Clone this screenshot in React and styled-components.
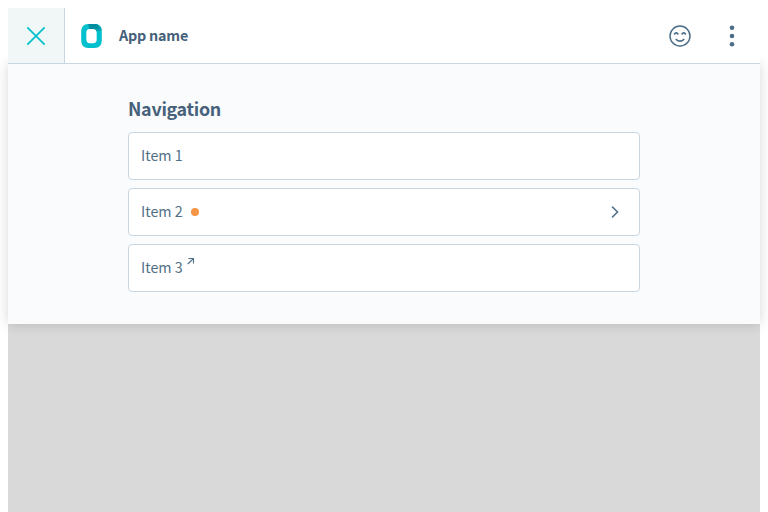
import React from "react";
import styled, { createGlobalStyle } from "styled-components";

const GlobalStyle = createGlobalStyle`
  * { box-sizing: border-box; }
  body {
    margin: 0;
    font-family: "Noto Sans CJK SC", sans-serif;
    color: #4f6f87;
  }
`;

const Page = styled.div`
  display: flex;
  flex-direction: column;
  height: 512px;
  padding: 8px 8px 0;
  background: #fff;
`;

const Header = styled.header`
  display: flex;
  flex: none;
  align-items: stretch;
  height: 56px;
  background: #fff;
  border-bottom: 1px solid #c8d6e2;
  position: relative;
  z-index: 2;
`;

const CloseButton = styled.button`
  display: flex;
  align-items: center;
  justify-content: center;
  width: 57px;
  padding: 0;
  border: 0;
  border-right: 1px solid #c8d6e2;
  background: #f1f7f7;
  color: #00bfca;
`;

const Brand = styled.div`
  display: flex;
  flex: 1;
  align-items: center;
  gap: 16px;
  padding-left: 16px;
`;

const AppName = styled.span`
  margin: -1px 0 1px;
  font-size: 14.33px;
  line-height: 24px;
  font-weight: 700;
  letter-spacing: -0.2px;
  color: #46617a;
`;

const Actions = styled.div`
  display: flex;
  align-items: center;
  gap: 28px;
  padding-right: 16px;
`;

const IconButton = styled.button`
  display: flex;
  padding: 0;
  border: 0;
  background: none;
  color: #4c6e88;
`;

const Menu = styled.nav`
  position: relative;
  z-index: 1;
  flex: none;
  height: 260px;
  padding: 30px 120px 32px;
  background: #fafbfd;
  box-shadow: 0 0 12px rgba(0, 0, 0, 0.16);
`;

const Backdrop = styled.div`
  flex: 1;
  background: #d9d9d9;
`;

const Title = styled.h2`
  margin: 0 0 10px;
  font-size: 17.9px;
  line-height: 28px;
  font-weight: 700;
  letter-spacing: -0.29px;
  color: #46617a;
`;

const List = styled.div`
  display: flex;
  flex-direction: column;
  gap: 8px;
`;

const Item = styled.a`
  display: flex;
  align-items: center;
  height: 48px;
  padding: 0 16px 0 12px;
  border: 1px solid #c8d6e2;
  border-radius: 4px;
  background: #fff;
`;

const Label = styled.span`
  padding-bottom: 2px;
  font-size: 14.33px;
  line-height: 24px;
`;

const Dot = styled.span`
  width: 8px;
  height: 8px;
  margin-left: 8px;
  border-radius: 50%;
  background: #f59547;
`;

const Chevron = styled.svg`
  margin-left: auto;
`;

const ExternalIcon = styled.svg`
  align-self: flex-start;
  margin: 12px 0 0 4px;
`;

const CloseIcon = () => (
  <svg width="20" height="20" viewBox="0 0 20 20" fill="none" stroke="currentColor" strokeWidth="1.7" strokeLinecap="round">
    <path d="M1.800 1.800 18.200 18.200M18.200 1.800 1.800 18.200" />
  </svg>
);

const Logo = () => (
  <svg width="22" height="24" viewBox="0 0 22 24">
    <path fill="#00c1cd" fillRule="evenodd" d="M7.500 0h6c5 0 7.300 3 7.300 8v8c0 5-2.300 8-7.300 8h-6C2.500 24 .2 21 .2 16V8c0-5 2.300-8 7.300-8ZM9 5C6.100 5 5.300 6.500 5.300 9v6c0 2.500.8 4.200 3.700 4.200h3c2.900 0 3.700-1.700 3.700-4.200V9c0-2.500-.8-4-3.700-4Z" />
    <path fill="#00a5b4" d="M6.800 0H13.500c4.500 0 6.900 2.500 7.200 6.500l-5.200 1C15.100 5.600 14 5 12 5H8Z" />
    <path fill="#008ea2" d="M7.500 0h6c1 0 2 .2 3 .7L18 4l-3.500 1.700C13.900 5.100 13 5 12 5H9Z" />
  </svg>
);

const SmileIcon = () => (
  <svg width="24" height="24" viewBox="0 0 24 24" fill="none" stroke="currentColor" strokeWidth="1.5" strokeLinecap="round">
    <circle cx="12" cy="12" r="10" />
    <path d="M6.600 9.900c.6-1.400 2.700-1.400 3.300 0M14.100 9.900c.6-1.400 2.700-1.400 3.300 0M8.200 15.500c2 2.100 5.600 2.100 7.600 0" strokeWidth="1.700" />
  </svg>
);

const MoreIcon = () => (
  <svg width="24" height="24" viewBox="0 0 24 24" fill="currentColor">
    <circle cx="12" cy="3.700" r="2.300" />
    <circle cx="12" cy="12" r="2.300" />
    <circle cx="12" cy="20.300" r="2.300" />
  </svg>
);

export default function App() {
  return (
    <>
      <GlobalStyle />
      <Page>
        <Header>
          <CloseButton aria-label="Close"><CloseIcon /></CloseButton>
          <Brand><Logo /><AppName>App name</AppName></Brand>
          <Actions>
            <IconButton aria-label="Feedback"><SmileIcon /></IconButton>
            <IconButton aria-label="More"><MoreIcon /></IconButton>
          </Actions>
        </Header>
        <Menu>
          <Title>Navigation</Title>
          <List>
            <Item><Label>Item 1</Label></Item>
            <Item>
              <Label>Item 2</Label>
              <Dot />
              <Chevron width="16" height="16" viewBox="0 0 16 16" fill="none" stroke="currentColor" strokeWidth="1.6" strokeLinecap="round">
                <path d="m5.500 3 5 5-5 5" />
              </Chevron>
            </Item>
            <Item>
              <Label>Item 3</Label>
              <ExternalIcon width="8" height="8" viewBox="0 0 8 8" fill="none" stroke="currentColor" strokeWidth="1.100">
                <path d="M.8 7 6.500 1.500M1.500 1.500h5v5" />
              </ExternalIcon>
            </Item>
          </List>
        </Menu>
        <Backdrop />
      </Page>
    </>
  );
}
